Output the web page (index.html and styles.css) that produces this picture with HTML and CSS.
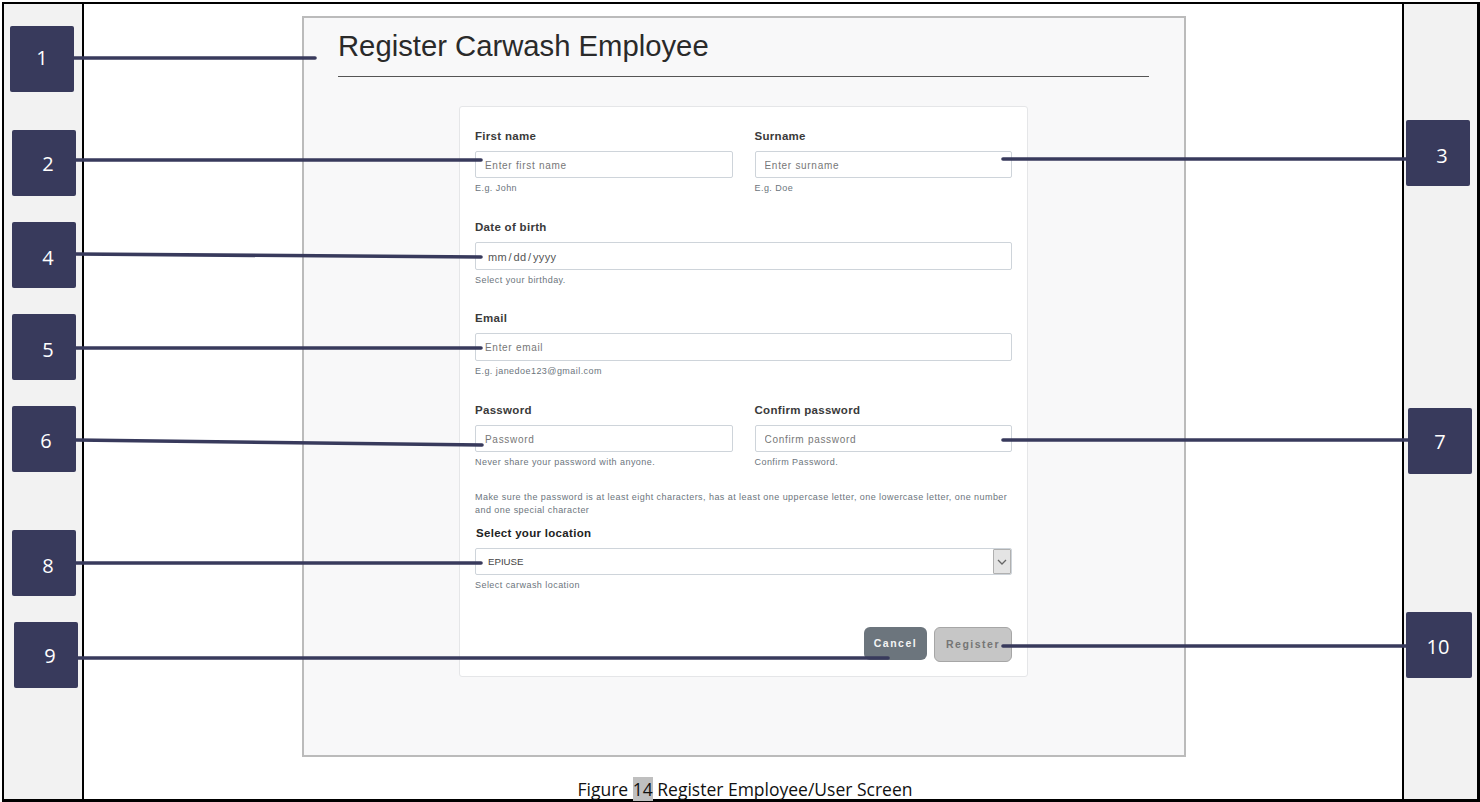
FILE: index.html
```html
<!DOCTYPE html>
<html>
  <head>
    <title>Register Carwash Employee</title>
    <link rel="stylesheet" href="styles.css">
  </head>
  <body>
    <div class="doc">
      <div class="gutter"></div>

      <div class="page">
        <div class="screen">
          <h1 class="title">Register Carwash Employee</h1>

          <form class="card">
            <div class="row">
              <div class="field">
                <label>First name</label>
                <input class="input" type="text" placeholder="Enter first name" />
                <small class="hint">E.g. John</small>
              </div>
              <div class="field">
                <label>Surname</label>
                <input class="input" type="text" placeholder="Enter surname" />
                <small class="hint">E.g. Doe</small>
              </div>
            </div>

            <div class="field wide">
              <label>Date of birth</label>
              <input class="input tall date" type="text" value="mm / dd / yyyy" />
              <small class="hint">Select your birthday.</small>
            </div>

            <div class="field wide">
              <label>Email</label>
              <input class="input tall" type="text" placeholder="Enter email" />
              <small class="hint">E.g. janedoe123@gmail.com</small>
            </div>

            <div class="row">
              <div class="field">
                <label>Password</label>
                <input class="input" type="text" placeholder="Password" />
                <small class="hint">Never share your password with anyone.</small>
              </div>
              <div class="field">
                <label>Confirm password</label>
                <input class="input" type="text" placeholder="Confirm password" />
                <small class="hint">Confirm Password.</small>
              </div>
            </div>

            <p class="note">Make sure the password is at least eight characters, has at least one uppercase letter, one lowercase letter, one number and one special character</p>

            <div class="field location">
              <label>Select your location</label>
              <div class="select">
                <span class="select-value">EPIUSE</span>
                <span class="select-arrow">
                  <svg width="10" height="6" viewBox="0 0 10 6"><path d="M1 1l4 4 4-4" fill="none" stroke="#666" stroke-width="1.3"/></svg>
                </span>
              </div>
              <small class="hint">Select carwash location</small>
            </div>

            <div class="actions">
              <button class="btn cancel" type="button">Cancel</button>
              <button class="btn register" type="button">Register</button>
            </div>
          </form>
        </div>

        <p class="caption">Figure <span class="mark">14</span> Register Employee/User Screen</p>
      </div>

      <div class="gutter right"></div>
    </div>

    <!-- callout leader lines -->
    <svg class="leaders" width="1480" height="802" viewBox="0 0 1480 802">
      <g fill="none" stroke="#383a5c" stroke-width="3.6" stroke-linecap="round">
        <path d="M74 58H315"/>
        <path d="M76 160H481"/>
        <path d="M1406 159H1003"/>
        <path d="M76 254L481 257"/>
        <path d="M76 348H481"/>
        <path d="M76 440L482 445"/>
        <path d="M1408 440H1003"/>
        <path d="M76 563H481"/>
        <path d="M78 658H888"/>
        <path d="M1406 646H1003"/>
      </g>
    </svg>

    <div class="tag t1">1</div>
    <div class="tag t2">2</div>
    <div class="tag t3">3</div>
    <div class="tag t4">4</div>
    <div class="tag t5">5</div>
    <div class="tag t6">6</div>
    <div class="tag t7">7</div>
    <div class="tag t8">8</div>
    <div class="tag t9">9</div>
    <div class="tag t10">10</div>
  </body>
</html>
```

FILE: styles.css
```css
* {
  box-sizing: border-box;
}

html,
body {
  margin: 0;
  height: 802px;
  overflow: hidden;
  background: #fff;
}

body {
  position: relative;
  font-family: "Liberation Sans", Arial, sans-serif;
}

.doc {
  display: flex;
  width: 1478px;
  height: 800px;
  margin: 2px 0 0 2px;
  border: 2px solid #000;
  border-right-width: 3px;
  border-bottom-width: 3px;
}

.gutter {
  width: 80px;
  background: #f2f2f2;
  border-right: 2px solid #000;
}

.gutter.right {
  width: 75px;
  border-right: 0;
  border-left: 2px solid #000;
}

.page {
  flex: 1;
  position: relative;
  padding: 12px 216px 0 218px;
}

.screen {
  height: 741px;
  padding: 0 35px 0 34px;
  background: #f8f8f9;
  border: 2px solid #bbbbbb;
}

.title {
  height: 59px;
  margin: 0;
  padding-top: 9px;
  font-size: 29.25px;
  line-height: 38px;
  font-weight: 400;
  color: #2a2a2a;
  border-bottom: 1px solid #555;
}

.card {
  width: 569px;
  margin: 29px 0 0 121px;
  padding: 21px 15px 14px;
  background: #fff;
  border: 1px solid #e5e6e8;
  border-radius: 3px;
}

.row {
  display: flex;
  gap: 22px;
}

.row .field {
  width: 257.5px;
}

.row + .wide {
  margin-top: 26px;
}

.wide + .wide {
  margin-top: 25px;
}

.wide + .row {
  margin-top: 26px;
}

.field label {
  display: block;
  height: 16px;
  margin-bottom: 7px;
  font-size: 11.5px;
  line-height: 16px;
  letter-spacing: 0.3px;
  font-weight: 700;
  color: #3a3a3a;
}

.input {
  display: block;
  width: 100%;
  height: 27px;
  padding: 1px 9px 0;
  font-family: "Liberation Sans", Arial, sans-serif;
  font-size: 10px;
  letter-spacing: 0.7px;
  color: #555;
  background: #fff;
  border: 1px solid #ced4da;
  border-radius: 2px;
}

.input::placeholder {
  color: #777;
  opacity: 1;
}

.input.tall {
  height: 28px;
}

.input.date {
  padding-left: 12px;
  font-size: 11px;
  letter-spacing: 0.4px;
  word-spacing: -2px;
}

.hint {
  display: block;
  height: 10px;
  margin-top: 5px;
  font-size: 9px;
  line-height: 10px;
  letter-spacing: 0.45px;
  color: #6c757d;
}

.note {
  margin: 24px 0 8px;
  font-size: 9px;
  line-height: 13px;
  letter-spacing: 0.45px;
  color: #6c757d;
}

.location label {
  padding-left: 1px;
  color: #222;
}

.select {
  display: flex;
  align-items: stretch;
  justify-content: space-between;
  height: 27px;
  font-size: 9.7px;
  color: #444;
  border: 1px solid #ced4da;
  border-radius: 2px;
}

.select-value {
  padding-left: 12px;
  line-height: 25px;
}

.select-arrow {
  display: flex;
  align-items: center;
  justify-content: center;
  width: 18px;
  background: #e4e4e4;
  border: 1px solid #b0b0b0;
  border-radius: 1px;
}

.actions {
  display: flex;
  align-items: flex-start;
  justify-content: flex-end;
  gap: 7px;
  margin-top: 37px;
}

.btn {
  padding: 0;
  font-family: "Liberation Sans", Arial, sans-serif;
  font-size: 10.5px;
  font-weight: 700;
  letter-spacing: 1.5px;
  border-radius: 6px;
}

.cancel {
  width: 63px;
  height: 33px;
  padding-bottom: 1px;
  color: #f4f4f4;
  background: #6c757d;
  border: 0;
}

.register {
  width: 78px;
  height: 35px;
  padding-bottom: 2px;
  color: #757575;
  background: #c6c6c6;
  border: 1px solid #a6a6a6;
}

.caption {
  position: absolute;
  left: 0;
  right: 0;
  top: 773px;
  margin: 0;
  padding-left: 4px;
  text-align: center;
  font-family: "Open Sans", sans-serif;
  font-size: 17.5px;
  line-height: 24px;
  color: #111;
}

.mark {
  background: #bfbfbf;
}

/* callouts sit over everything else */
.leaders {
  position: absolute;
  left: 0;
  top: 0;
}

.tag {
  position: absolute;
  display: flex;
  align-items: center;
  justify-content: center;
  width: 64px;
  height: 66px;
  font-family: "Open Sans", sans-serif;
  font-size: 20px;
  color: #fff;
  background: #383a5c;
  border-radius: 2px;
}

.t1 { left: 10px; top: 26px; padding-bottom: 4px; }
.t2 { left: 12px; top: 130px; padding-left: 8px; }
.t3 { left: 1406px; top: 120px; padding: 4px 0 0 8px; }
.t4 { left: 12px; top: 222px; padding: 4px 0 0 8px; }
.t5 { left: 12px; top: 314px; padding: 4px 0 0 8px; }
.t6 { left: 12px; top: 406px; padding: 2px 0 0 4px; }
.t7 { left: 1408px; top: 408px; }
.t8 { left: 12px; top: 530px; padding: 4px 0 0 8px; }
.t9 { left: 14px; top: 622px; padding-left: 8px; }
.t10 { left: 1406px; top: 612px; width: 66px; padding: 2px 2px 0 0; }
```
